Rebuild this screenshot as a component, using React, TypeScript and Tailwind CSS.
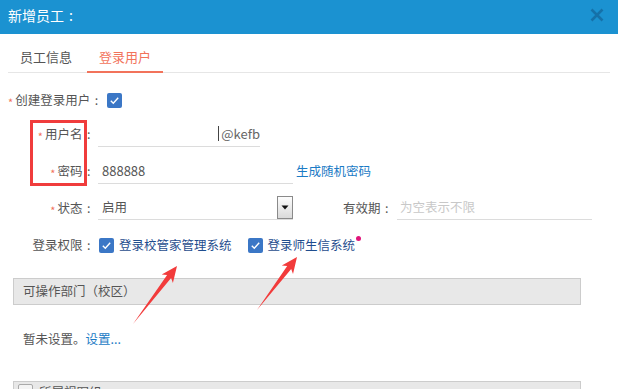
function Check() {
  return (
    <span className="w-[15px] h-[15px] rounded-[2px] bg-[#3b77c6] flex items-center justify-center shrink-0">
      <svg width="11" height="11" viewBox="0 0 11 11">
        <path d="M1.8 5.8 L4.3 8.2 L9.2 2.8" fill="none" stroke="#fff" strokeWidth="1.4" />
      </svg>
    </span>
  );
}

function Star() {
  return <span className="text-[#f2735b] text-[11px] leading-none mr-[2px] relative top-[2px]">*</span>;
}

function Colon() {
  return <span className="inline-block w-[12.5px] text-center">:</span>;
}

export default function App() {
  return (
    <div
      className="relative w-[618px] h-[389px] overflow-hidden bg-white text-[12.5px] text-[#555]"
      style={{ fontFamily: '"Noto Sans CJK SC", "Microsoft YaHei", sans-serif' }}
    >
      <header className="h-[34px] bg-[#1b92d1] flex items-center justify-between pl-2 pr-[14px]">
        <span className="text-white text-[14px] leading-none relative -top-[2px]">
          新增员工<span className="inline-block w-[14px] text-center">:</span>
        </span>
        <svg width="14" height="14" viewBox="0 0 14 14" className="relative -top-[2px]">
          <path d="M1.5 1.5 L12.5 12.5 M12.5 1.5 L1.5 12.5" stroke="#1571a9" strokeWidth="2.6" />
        </svg>
      </header>

      <div className="mx-2 h-[39px] flex border-b border-[#e6e6e6] text-[13px]">
        <div className="w-[79px] pl-3 pt-[14px] leading-[18px] text-[#555]">员工信息</div>
        <div className="w-[76px] text-center pt-[14px] leading-[18px] text-[#f2735b] border-b-2 border-[#f2735b] -mb-px">
          登录用户
        </div>
      </div>

      <div className="mt-[16px] h-[22px] flex items-center pl-2">
        <Star />
        <span>创建登录用户</span>
        <Colon />
        <span className="ml-[4px]">
          <Check />
        </span>
      </div>

      <div className="mt-[10px] h-[26px] flex items-center">
        <div className="w-[95px] flex justify-end items-center">
          <Star />
          <span>用户名</span>
          <Colon />
        </div>
        <div className="ml-[3px] w-[162px] h-full flex items-center border-b border-[#dcdcdc]">
          <div className="flex-1 h-[15px] border-r border-[#444]" />
          <span className="ml-[2px] text-[13px] text-[#666]">@kefb</span>
        </div>
      </div>

      <div className="mt-[11px] h-[26px] flex items-center">
        <div className="w-[95px] flex justify-end items-center">
          <Star />
          <span>密码</span>
          <Colon />
        </div>
        <div className="ml-[3px] w-[195px] h-full flex items-center border-b border-[#dcdcdc] pl-1 text-[13px] text-[#555]">
          888888
        </div>
        <span className="ml-[3px] text-[#1b7bc5]">生成随机密码</span>
      </div>

      <div className="mt-[12px] h-[24px] flex items-center">
        <div className="w-[95px] flex justify-end items-center">
          <Star />
          <span>状态</span>
          <Colon />
        </div>
        <div className="ml-[3px] w-[195px] h-full flex items-center justify-between border-b border-[#dcdcdc] pl-1">
          <span>启用</span>
          <span className="w-[16px] h-[23px] border border-[#8a8a8a] bg-gradient-to-b from-[#fdfdfd] to-[#dadada] flex items-center justify-center">
            <svg width="8" height="5" viewBox="0 0 8 5">
              <path d="M0.5 0.5 L7.5 0.5 L4 4.5 Z" fill="#111" />
            </svg>
          </span>
        </div>
        <span className="ml-[50px] w-[54px] flex">
          有效期
          <Colon />
        </span>
        <div className="w-[195px] h-full flex items-center border-b border-[#dcdcdc] pl-[3px] text-[#c8c8c8]">
          为空表示不限
        </div>
      </div>

      <div className="mt-[15px] h-[20px] flex items-center">
        <div className="w-[95px] flex justify-end">
          登录权限
          <Colon />
        </div>
        <span className="ml-[4px]">
          <Check />
        </span>
        <span className="ml-[5px] text-[#1f4d8e]">登录校管家管理系统</span>
        <span className="ml-[16px]">
          <Check />
        </span>
        <span className="ml-[5px] text-[#1f4d8e] relative">
          登录师生信系统
          <span className="absolute -right-[6px] top-[0px] w-[5px] h-[5px] rounded-full bg-[#e0157a]" />
        </span>
      </div>

      <div className="mt-[23px] ml-[13px] w-[568px] h-[27px] bg-[#e8e8e8] border border-[#cccccc] flex items-center pl-[9px]">
        可操作部门（校区）
      </div>

      <div className="mt-[24px] ml-[23px] h-[20px] flex items-center">
        <span>暂未设置。</span>
        <span className="text-[#1b7bc5]">设置...</span>
      </div>

      <div className="mt-[32px] ml-[13px] w-[568px] h-[27px] bg-[#e8e8e8] border border-[#cccccc] flex items-start pl-[4px] pt-[2px]">
        <span className="w-[15px] h-[15px] border border-[#aaa] bg-[#f4f4f4] rounded-[2px]" />
        <span className="ml-[6px] leading-[16px]">所属视图组</span>
      </div>

      <div className="absolute left-[30px] top-[120px] w-[57px] h-[66px] border-[3px] border-[#f03c3c]" />

      <svg className="absolute left-0 top-0 pointer-events-none" width="618" height="389">
        <polygon
          points="133,324 171.1,277.9 172.9,283 177,266 161.7,274.6 167.1,274.9"
          fill="#f23b3b"
        />
        <polygon
          points="257,310 291.2,268.9 293,274 297,257 281.8,265.6 287.2,265.9"
          fill="#f23b3b"
        />
      </svg>
    </div>
  );
}
